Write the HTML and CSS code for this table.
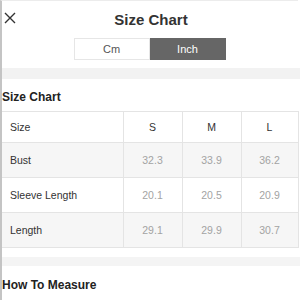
FILE: index.html
```html
<!DOCTYPE html>
<html>
<head>
<meta charset="utf-8">
<link rel="stylesheet" href="styles.css">
</head>
<body>
<div class="page">
  <header class="top">
    <svg class="close" width="12" height="12" viewBox="0 0 12 12"><path d="M1 1 L11 11 M11 1 L1 11" stroke="#333" stroke-width="1.4" fill="none"/></svg>
    <h1 class="title">Size Chart</h1>
  </header>
  <div class="toggle">
    <div class="opt">Cm</div>
    <div class="opt active">Inch</div>
  </div>
  <div class="band"></div>
  <h2 class="section">Size Chart</h2>
  <table class="chart">
    <colgroup><col class="c-label"><col class="c-val"><col class="c-val"><col class="c-last"></colgroup>
    <tr class="head"><td class="label">Size</td><td>S</td><td>M</td><td>L</td></tr>
    <tr class="alt"><td class="label">Bust</td><td>32.3</td><td>33.9</td><td>36.2</td></tr>
    <tr><td class="label">Sleeve Length</td><td>20.1</td><td>20.5</td><td>20.9</td></tr>
    <tr class="alt"><td class="label">Length</td><td>29.1</td><td>29.9</td><td>30.7</td></tr>
  </table>
  <div class="band band2"></div>
  <h2 class="section section2">How To Measure</h2>
</div>
</body>
</html>
```
FILE: styles.css
```css
html, body { margin: 0; padding: 0; background: #fff; }
body { font-family: "Liberation Sans", Arial, sans-serif; color: #333; overflow: hidden; }
.page { width: 298px; height: 300px; border-left: 2px solid #c4c4c4; border-top: 1px solid #ececec; box-sizing: border-box; position: relative; }
.top { height: 36px; display: flex; align-items: center; justify-content: center; position: relative; }
.close { position: absolute; left: 2px; top: 11px; }
.title { margin: 0; font-size: 15px; font-weight: bold; color: #333; margin-left: 2px; }
.toggle { display: flex; justify-content: center; margin-top: 1px; margin-left: -1px; }
.opt { width: 74px; height: 20px; line-height: 20px; text-align: center; font-size: 11px; color: #555; border: 1px solid #e6e6e6; }
.opt.active { background: #666; color: #fff; border-color: #666; }
.band { height: 11px; background: #f2f2f2; margin-top: 8px; margin-right: -2px; }
.section { margin: 0; font-size: 12px; font-weight: bold; color: #222; height: 32px; line-height: 36px; }
.chart { border-collapse: collapse; width: 296px; font-size: 10.5px; table-layout: fixed; }
.c-label { width: 121px; }
.c-val { width: 59px; }
.c-last { width: 57px; }
.chart td { border: 1px solid #e4e4e4; text-align: center; color: #a3a3a3; height: 34px; padding: 0; }
.chart td.label { text-align: left; padding-left: 8px; color: #333; }
.chart tr.head td { height: 30px; color: #333; }
.chart tr.alt td { background: #f6f6f6; }
.chart td:first-child { border-left: none; }
.band2 { margin-top: 9px; height: 9px; background: #f4f4f4; }
.section2 { height: auto; line-height: 15px; margin-top: 12px; }
```
